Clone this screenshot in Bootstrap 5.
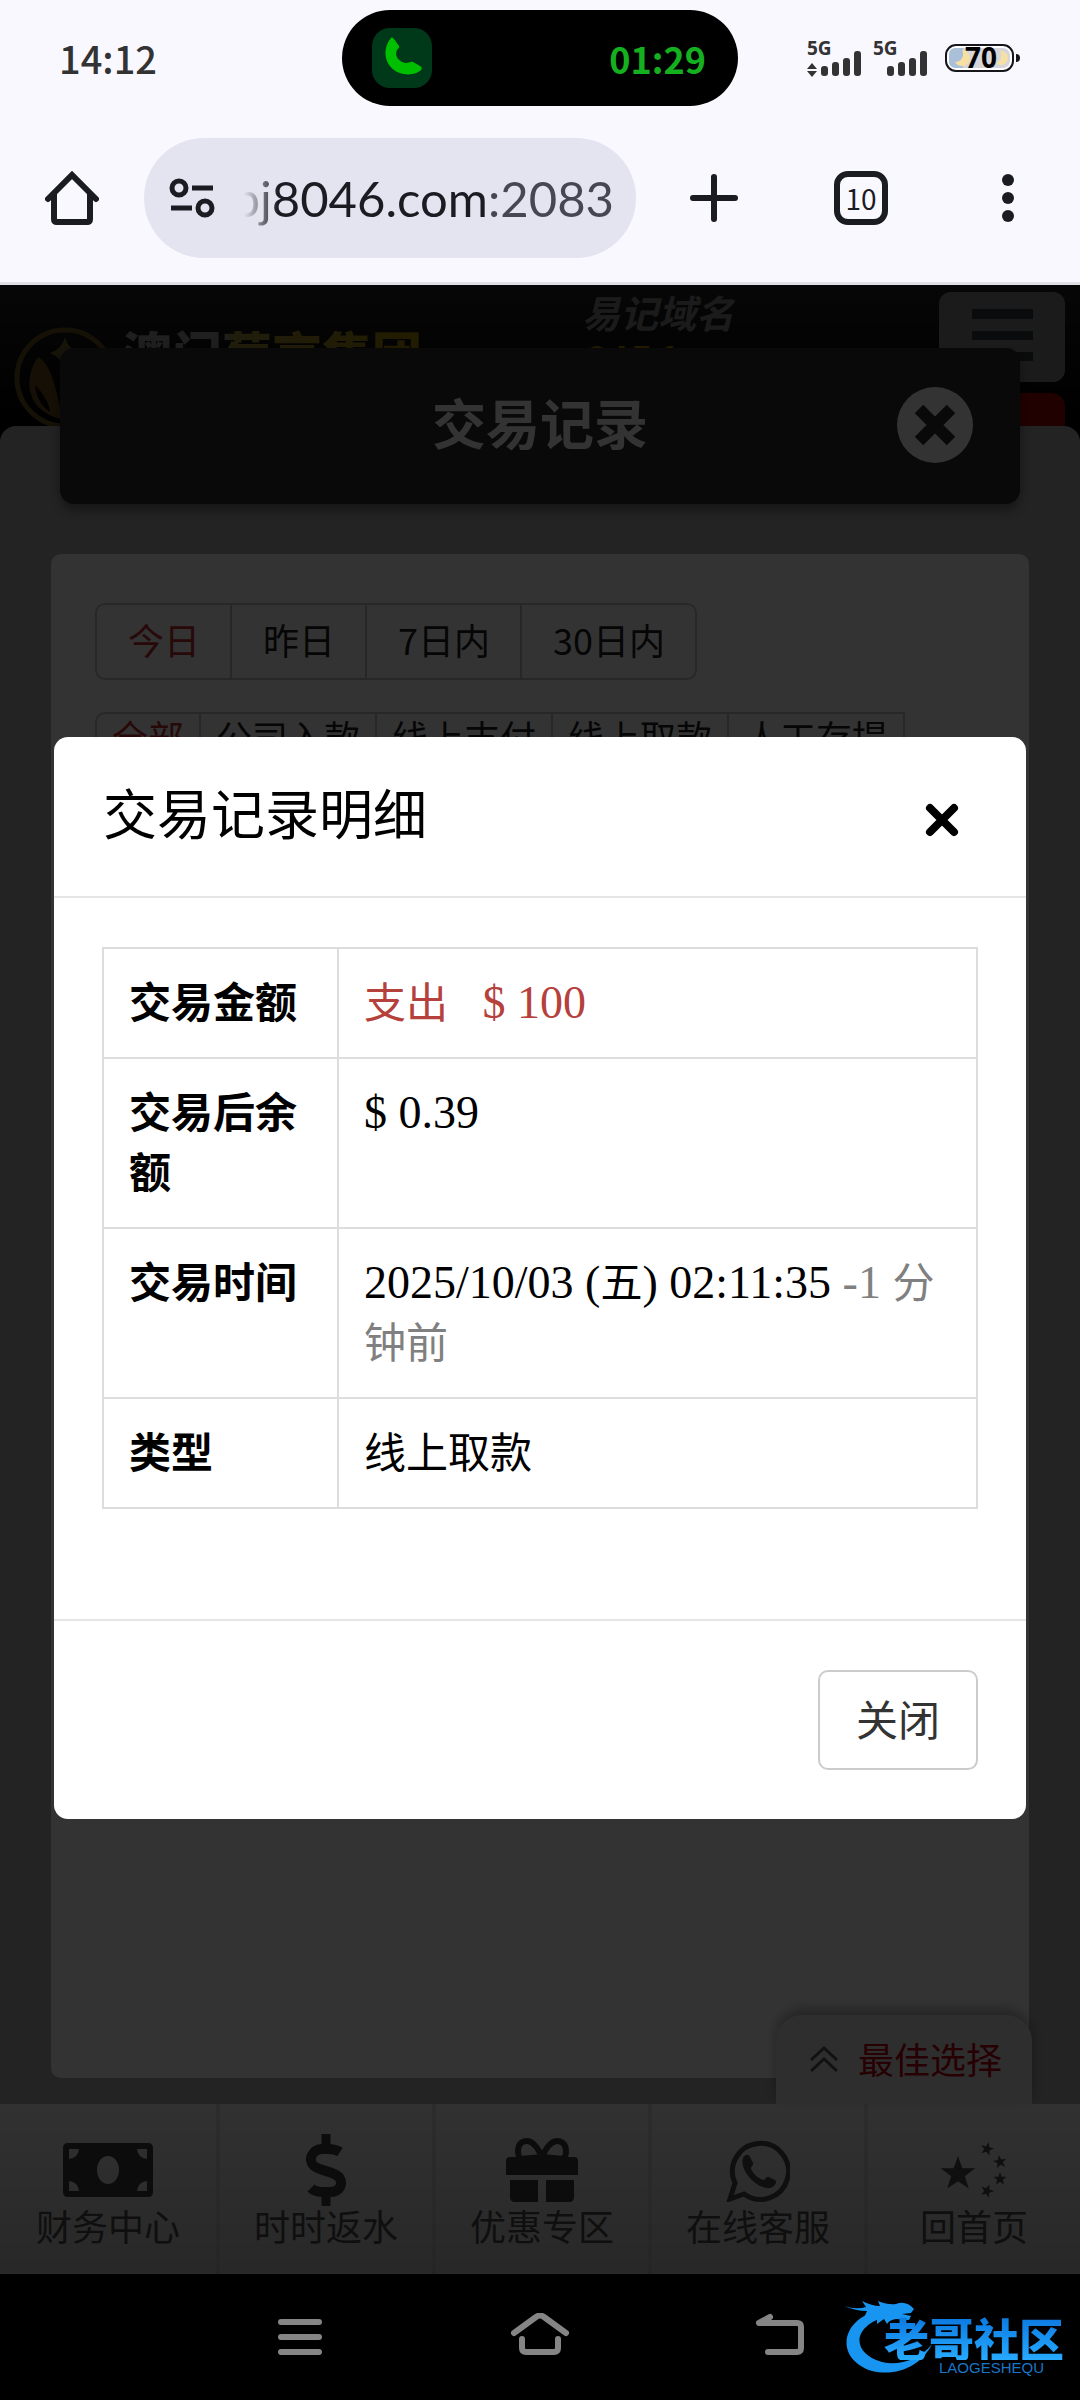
<!DOCTYPE html>
<html lang="zh-CN">
<head>
<meta charset="utf-8">
<meta name="viewport" content="width=device-width, initial-scale=1">
<title>交易记录明细</title>
<link href="https://cdn.jsdelivr.net/npm/bootstrap@5.3.0/dist/css/bootstrap.min.css" rel="stylesheet">
<style>
  body { font-family: "Noto Sans CJK SC", sans-serif; font-size: 36px; line-height: 1.4; background: #000; color: #000; }
  svg { display: block; }
  button { font-family: inherit; }
  .plain-btn { background: none; border: 0; padding: 0; color: inherit; }

  /* phone status bar */
  .phone-top { background: #f9f8ff; border-bottom: 3px solid #e0e0e6; }
  .status-row { height: 116px; padding: 0 59px; color: #333; }
  .clock { font-size: 38px; font-weight: 500; line-height: 48px; }
  .island { width: 396px; height: 96px; border-radius: 48px; background: #000; padding: 0 32px 0 30px; color: #15b01f; }
  .island .clock { font-size: 36px; font-weight: 700; }
  .call-icon { width: 60px; height: 60px; border-radius: 18px; background: #00381a; }
  .phone-state { gap: 16px; }

  /* browser toolbar */
  .tool-row { padding: 22px 45px 24px; color: #1b1b22; gap: 45px; }
  .tool-icon { width: 54px; height: 54px; }
  .address-pill { height: 120px; border-radius: 60px; background: #e4e3f0; padding: 0 22px 0 24px; gap: 24px; min-width: 0; }
  .url-window { -webkit-mask-image: linear-gradient(90deg, transparent 4px, #000 38px); mask-image: linear-gradient(90deg, transparent 4px, #000 38px); min-width: 0; }
  .url-box { width: 420px; flex: none; border: 0; padding: 0; text-align: right; font-family: Lato, sans-serif; font-size: 49px; line-height: 60px; outline: 0;
    color: #1b1b22; -webkit-text-fill-color: transparent; background: linear-gradient(90deg, #1b1b22 290px, #474753 290px); -webkit-background-clip: text; background-clip: text; }
  .tool-group { gap: 93px; margin-left: 6px; }
  .tab-count { border: 6px solid #1b1b22; border-radius: 14px; font-size: 28px; line-height: 40px; }

  /* web page */
  .site { background: #000; min-height: 0; }
  .site-head { height: 141px; background: linear-gradient(#222, #000); overflow: visible; }
  .brand-mark { margin: 42px 0 0 14px; }
  .brand-name { font-size: 50px; font-weight: 900; line-height: 50px; margin: 42px 0 0 6px; background: linear-gradient(90deg, #999 35%, #a09040 36%, #a88a00); -webkit-background-clip: text; background-clip: text; -webkit-text-fill-color: transparent; }
  .easy-domain { font-size: 38px; font-weight: 700; font-style: italic; line-height: 46px; margin: 4px 0 0 160px; color: #888; }
  .easy-domain span { display: block; color: #b58600; font-family: Lato, sans-serif; font-size: 44px; line-height: 52px; }
  .menu-col { width: 126px; margin: 7px 15px 0 auto; }
  .menu-btn { display: block; width: 126px; height: 90px; border-radius: 12px; background: #888; border: 0; padding: 0; }
  .menu-tab { height: 60px; margin-top: 11px; border-radius: 14px; background: #a50000; }
  .sheet { background: #afafaf; border-radius: 16px 16px 0 0; z-index: 1; }
  .title-bar { height: 156px; margin: -78px 60px 50px; background: #302d2f; color: #fff; border-radius: 14px; box-shadow: 0 6px 12px rgba(0,0,0,.4); padding: 0 47px; }
  .title-bar h1 { font-size: 54px; font-weight: 700; line-height: 80px; padding-bottom: 8px; }
  .title-bar button { right: 47px; top: 39px; }
  .record-card { margin: 0 51px 26px; padding: 49px 44px; background: #fff; border-radius: 10px; }
  .filter { border: 2px solid #c4c4c4; border-radius: 10px; width: max-content; }
  .filter button { border-right: 2px solid #c4c4c4; color: #222; }
  .filter button:last-child { border-right: 0; }
  .filter button.picked { color: #c23030; }
  .filter-days button { padding: 0 30px 4px 31px; line-height: 69px; }
  .filter-kind { margin-top: 32px; border-radius: 10px 0 0 0; }
  .filter-kind button { padding: 0 15px 6px; line-height: 44px; }

  .foot-nav { height: 170px; background: linear-gradient(#f4f4f4, #c6c6c6); }
  .foot-nav a { flex: 0 0 20%; color: #4c4c4c; text-decoration: none; padding-top: 30px; line-height: 38px; }
  .foot-nav a + a { border-left: 4px solid rgba(150,150,150,.25); }
  .icon-box { height: 72px; }
  .best-pick { right: 48px; bottom: 170px; height: 89px; width: 256px; padding: 0 0 2px 4px; border-radius: 26px 26px 0 0; background: #e3e3e3; box-shadow: 0 -6px 12px rgba(0,0,0,.3); color: #c00010; gap: 20px; }

  /* dialog */
  .shade { background: rgba(0,0,0,.8); z-index: 5; padding: 0 54px 3px; }
  .detail-box { border: 0; border-radius: 14px; background: #fff; }
  .detail-box .modal-header { padding: 36px 66px 40px 49px; border-bottom: 2px solid #e5e5e5; }
  .detail-box .modal-header button { padding-top: 10px; }
  .detail-box .modal-title { font-size: 54px; font-weight: 400; line-height: 78px; padding-bottom: 5px; }
  .detail-box .modal-body { padding: 49px 48px; }
  .detail-table { margin-bottom: 61px; font-size: 42px; line-height: 60px; --bs-table-bg: #fff; table-layout: fixed; border-color: #ddd; color: #000; }
  .detail-table th, .detail-table td { padding: 21px 25px 27px; border: 2px solid #ddd; vertical-align: top; color: #000; }
  .detail-table th { width: 235px; font-weight: 700; }
  .num { font-family: "Liberation Serif", serif; font-size: 46px; line-height: 1; white-space: pre-wrap; }
  .detail-table .spend { color: #b5403c; }
  .detail-table .ago { color: #808080; }
  .detail-box .modal-footer { padding: 49px 48px; border-top: 2px solid #e5e5e5; }
  .close-btn { font-size: 42px; line-height: 60px; padding: 16px 36px 20px; border: 2px solid #ccc; border-radius: 10px; background: #fff; color: #333; margin: 0; }

  /* android keys */
  .key-row { height: 126px; background: #000; color: #858585; gap: 180px; }
  .key-row button { width: 60px; height: 48px; }
  .stamp { right: 16px; top: 22px; }
  .stamp-words { margin: 20px 0 0 -52px; }
  .stamp-name { font-size: 45px; font-weight: 900; line-height: 44px; background: linear-gradient(#0b78e0, #27aaff); -webkit-background-clip: text; background-clip: text; -webkit-text-fill-color: transparent; }
  .stamp-latin { font-family: "Liberation Sans", sans-serif; font-size: 15px; line-height: 16px; color: #1976c8; padding-right: 20px; }
</style>
<script src="https://cdn.jsdelivr.net/npm/bootstrap@5.3.0/dist/js/bootstrap.bundle.min.js"></script>
</head>
<body>
<div class="d-flex flex-column min-vh-100">

  <header class="phone-top">
    <div class="status-row d-flex align-items-center">
      <div class="clock col">14:12</div>
      <div class="island d-flex align-items-center justify-content-between">
        <div class="call-icon"><svg width="60" height="60" viewBox="0 0 60 60"><path d="M19 10c1-1 2 0 3 1l5 7c1 1-1 3-2 4-3 6 2 12 9 13 3 0 5-2 7-1l7 4c2 1 2 3 1 4-4 4-13 6-21 3C13 40 9 22 19 10z" fill="#00bf00"/></svg></div>
        <div class="clock">01:29</div>
      </div>
      <div class="phone-state col d-flex justify-content-end align-items-center">
        <svg width="122" height="50" viewBox="0 0 122 50" fill="#333">
          <text x="0" y="22" font-family="Noto Sans, sans-serif" font-weight="700" font-size="19">5G</text>
          <path d="M0 36l5-6 5 6zM0 38l5 6 5-6z"/>
          <rect x="14" y="33" width="7" height="10" rx="3"/><rect x="25" y="29" width="7" height="14" rx="3"/><rect x="36" y="25" width="7" height="18" rx="3"/><rect x="47" y="18" width="7" height="25" rx="3"/>
          <text x="66" y="22" font-family="Noto Sans, sans-serif" font-weight="700" font-size="19">5G</text>
          <rect x="80" y="33" width="7" height="10" rx="3"/><rect x="91" y="29" width="7" height="14" rx="3"/><rect x="102" y="25" width="7" height="18" rx="3"/><rect x="113" y="18" width="7" height="25" rx="3"/>
        </svg>
        <svg width="76" height="48" viewBox="0 -8 76 48">
          <rect x="1" y="3" width="67" height="26" rx="10" fill="#fff" stroke="#16161c" stroke-width="2"/>
          <rect x="4" y="6" width="61" height="20" rx="7" fill="#d6d6da"/><path d="M4 13q0-7 7-7h7v20h-7q-7 0-7-7z" fill="#a9c0d8"/>
          <path d="M17 8a8 8 0 1 1-7 12 8 8 0 0 0 7-12zM55 9a7 7 0 1 1-4 12 8 8 0 0 0 4-12z" fill="#f7e0a4"/>
          <text x="36" y="26" text-anchor="middle" font-family="Noto Sans, sans-serif" font-weight="700" font-size="28" fill="#000">70</text>
          <path d="M71 12q4 0 4 4t-4 4z" fill="#16161c"/>
        </svg>
      </div>
    </div>
    <div class="tool-row d-flex align-items-center">
      <button class="plain-btn tool-icon" aria-label="主页"><svg width="54" height="54" viewBox="0 0 54 54" fill="none" stroke="#1b1b22" stroke-width="6"><path d="M3 28L27 4l24 24" stroke-linecap="round"/><path d="M9 23v25q0 3 3 3h30q3 0 3-3V23"/></svg></button>
      <div class="address-pill d-flex align-items-center flex-grow-1">
        <svg class="flex-shrink-0" width="48" height="40" viewBox="0 0 48 40" fill="none" stroke="#1b1b22" stroke-width="5"><circle cx="11" cy="10" r="7"/><circle cx="37" cy="30" r="7"/><path d="M24 10h21M3 30h21"/></svg>
        <div class="url-window d-flex justify-content-end overflow-hidden flex-grow-1"><input class="url-box" type="text" aria-label="网址" value="pj8046.com:2083"></div>
      </div>
      <div class="tool-group d-flex align-items-center">
        <button class="plain-btn tool-icon" aria-label="新标签页"><svg width="54" height="54" viewBox="0 0 54 54" stroke="#1b1b22" stroke-width="6" stroke-linecap="round"><path d="M27 6v42M6 27h42"/></svg></button>
        <button class="plain-btn tool-icon tab-count">10</button>
        <button class="plain-btn tool-icon" aria-label="更多"><svg width="54" height="54" viewBox="0 0 54 54" fill="#1b1b22"><circle cx="27" cy="9" r="6"/><circle cx="27" cy="27" r="6"/><circle cx="27" cy="45" r="6"/></svg></button>
      </div>
    </div>
  </header>

  <main class="site position-relative flex-grow-1 d-flex flex-column">
    <div class="site-head d-flex align-items-start">
      <svg class="brand-mark flex-shrink-0" width="102" height="102" viewBox="0 0 102 102"><circle cx="51" cy="51" r="48" fill="none" stroke="#6b5520" stroke-width="5"/><path d="M51 10q3 12 15 17-12 4-15 16-3-12-15-17 12-4 15-16z" fill="#6f6030"/><path d="M24 30C10 50 10 82 46 92V80C42 60 36 36 24 30zm-3 28c8 8 14 18 15 27-8-5-14-15-15-27z" fill="#6b4d1a" fill-rule="evenodd"/></svg>
      <div class="brand-name">澳门葡京集团</div>
      <div class="easy-domain">易记域名<span>9J56</span></div>
      <div class="menu-col">
        <button class="menu-btn" aria-label="菜单"><svg width="126" height="90" viewBox="0 0 126 90" fill="#34383c"><path d="M33 17h61v10H33zM33 39h61v9H33zM33 60h61v9H33z"/></svg></button>
        <div class="menu-tab"></div>
      </div>
    </div>

    <section class="sheet position-relative flex-grow-1 d-flex flex-column">
      <div class="title-bar position-relative d-flex align-items-center justify-content-center">
        <h1 class="m-0">交易记录</h1>
        <button class="plain-btn position-absolute" aria-label="关闭页面"><svg width="76" height="76" viewBox="0 0 76 76"><circle cx="38" cy="38" r="38" fill="#fff"/><path d="M22 22l32 32M54 22L22 54" stroke="#302d2f" stroke-width="12"/></svg></button>
      </div>
      <div class="record-card flex-grow-1">
        <div class="filter filter-days d-flex">
          <button class="plain-btn picked">今日</button><button class="plain-btn">昨日</button><button class="plain-btn">7日内</button><button class="plain-btn">30日内</button>
        </div>
        <div class="filter filter-kind d-flex">
          <button class="plain-btn picked">全部</button><button class="plain-btn">公司入款</button><button class="plain-btn">线上支付</button><button class="plain-btn">线上取款</button><button class="plain-btn">人工存提</button>
        </div>
      </div>
    </section>

    <button class="plain-btn best-pick position-absolute d-flex align-items-center justify-content-center z-1">
      <svg width="28" height="28" viewBox="0 0 28 28" fill="none" stroke="#555" stroke-width="3"><path d="M1 15L14 3l13 12M1 26l13-12 13 12"/></svg>最佳选择
    </button>
    <nav class="foot-nav d-flex text-center">
      <a href="#"><div class="icon-box d-flex align-items-center justify-content-center"><svg width="90" height="54" viewBox="0 0 90 54"><path fill="#3c3e44" fill-rule="evenodd" d="M5 0h80q5 0 5 5v44q0 5-5 5H5q-5 0-5-5V5q0-5 5-5zM6 6v10q9-1 10-10zM84 6v10q-9-1-10-10zM6 48V38q9 1 10 10zM84 48V38q-9 1-10 10zM45 13a11 14 0 1 0 0 28 11 14 0 1 0 0-28z"/></svg></div>财务中心</a>
      <a href="#"><div class="icon-box d-flex align-items-center justify-content-center"><svg width="42" height="72" viewBox="0 0 42 72" fill="none" stroke="#3c3e44" stroke-width="10"><path d="M35 18C29 14 24 15 18 15 6 15 3 27 9 32c6 5 19 5 25 11 5 8 0 15-9 15-7 0-14 1-19-4"/><path d="M21 0v14M21 58v14" stroke-width="9"/></svg></div>时时返水</a>
      <a href="#"><div class="icon-box d-flex align-items-center justify-content-center"><svg width="72" height="64" viewBox="0 0 72 64" fill="#3c3e44"><path d="M4 19h64q4 0 4 4v14H0V23q0-4 4-4zM4 42h28v22H9q-5 0-5-5zM40 42h28v17q0 5-5 5H40z"/><path d="M36 19C31 8 26 3 21 3c-9 0-11 10-7 18zM36 19C41 8 46 3 51 3c9 0 11 10 7 18z" fill="none" stroke="#3c3e44" stroke-width="6"/></svg></div>优惠专区</a>
      <a href="#"><div class="icon-box d-flex align-items-center justify-content-center"><svg width="64" height="64" viewBox="0 0 64 64"><path d="M4 61l5-16A28 28 0 1 1 18 56z" fill="none" stroke="#4a4a4a" stroke-width="5"/><path d="M17 20c2-4 6-4 7-1l3 6c1 2-3 4-2 6 3 6 7 9 12 11 2 1 3-4 6-3l6 3c3 2-1 7-5 8-12 2-31-17-27-30z" fill="#4a4a4a"/></svg></div>在线客服</a>
      <a href="#"><div class="icon-box d-flex align-items-center justify-content-center"><svg width="68" height="56" viewBox="0 0 68 56" fill="#4a4a4a"><defs><path id="st" d="M0-10L2.4-3.2H9.6L3.8 1.2 6 8 0 4-6 8-3.8 1.2-9.6-3.2H-2.4z"/></defs><use href="#st" transform="translate(18 32) scale(1.8)"/><use href="#st" transform="translate(47 7) rotate(15) scale(.7)"/><use href="#st" transform="translate(60 20) rotate(-10) scale(.7)"/><use href="#st" transform="translate(60 37) scale(.7)"/><use href="#st" transform="translate(47 49) rotate(20) scale(.7)"/></svg></div>回首页</a>
    </nav>

    <div class="shade position-absolute top-0 start-0 w-100 h-100 d-flex align-items-center" role="dialog" aria-labelledby="detail-title">
      <div class="modal-content detail-box">
        <div class="modal-header">
          <h2 class="modal-title" id="detail-title">交易记录明细</h2>
          <button class="plain-btn" aria-label="关闭"><svg width="36" height="36" viewBox="0 0 36 36" stroke="#000" stroke-width="8" stroke-linecap="round"><path d="M6 6l24 24M30 6L6 30"/></svg></button>
        </div>
        <div class="modal-body">
          <table class="table table-bordered detail-table">
            <tbody>
              <tr><th scope="row">交易金额</th><td class="spend">支出<span class="num">   $ 100</span></td></tr>
              <tr><th scope="row">交易后余额</th><td><span class="num">$ 0.39</span></td></tr>
              <tr><th scope="row">交易时间</th><td><span class="num">2025/10/03 (</span>五<span class="num">) 02:11:35 </span><span class="ago"><span class="num">-1 </span>分钟前</span></td></tr>
              <tr><th scope="row">类型</th><td>线上取款</td></tr>
            </tbody>
          </table>
        </div>
        <div class="modal-footer">
          <button class="close-btn">关闭</button>
        </div>
      </div>
    </div>
  </main>

  <footer class="key-row position-relative d-flex align-items-center justify-content-center">
    <button class="plain-btn" aria-label="最近任务"><svg width="60" height="48" viewBox="0 0 60 48" stroke="#858585" stroke-width="6" stroke-linecap="round"><path d="M11 9h38M11 24h38M11 39h38"/></svg></button>
    <button class="plain-btn" aria-label="桌面"><svg width="60" height="48" viewBox="0 0 60 48" fill="none" stroke="#858585" stroke-width="6" stroke-linecap="round" stroke-linejoin="round"><path d="M4 20L26 4q4-3 8 0l22 16M12 26v9q0 4 4 4h28q4 0 4-4v-9"/></svg></button>
    <button class="plain-btn" aria-label="返回"><svg width="60" height="48" viewBox="0 0 60 48" fill="none" stroke="#858585" stroke-width="6" stroke-linecap="round" stroke-linejoin="round"><path d="M20 4L9 10h38q4 0 4 4v21q0 4-4 4H18"/></svg></button>
    <div class="stamp position-absolute d-flex">
      <svg class="flex-shrink-0" width="92" height="80" viewBox="0 0 92 80" fill="#1795f0"><path d="M38 14C-2 20-12 62 28 75c26 6 50-6 60-27-12 16-34 22-50 18C8 58 6 30 44 20z"/><path d="M0 10q12 4 22 1l-4-6q10 5 18 5l-2-5q10 4 18 3 10-4 18 5l-3 4-9 1 9 2-2 4-13-1q-7 1-9 5l-3-5-7 5v-5l-8 3 3-5q-6 0-9 3l4-9Q12 15 0 10z"/></svg>
      <div class="stamp-words text-end"><div class="stamp-name">老哥社区</div><div class="stamp-latin">LAOGESHEQU</div></div>
    </div>
  </footer>
</div>
</body>
</html>
